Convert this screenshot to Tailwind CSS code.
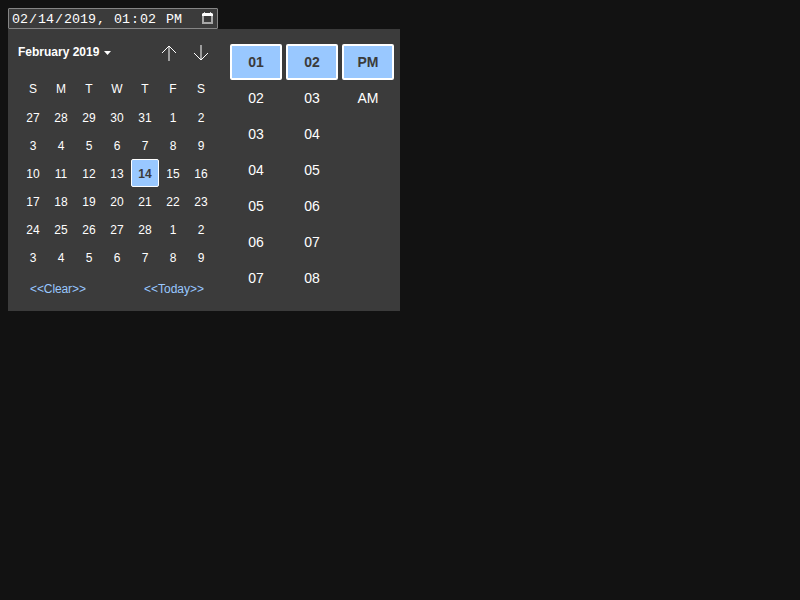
<!DOCTYPE html>
<html lang="en">
<head>
<meta charset="utf-8">
<title>Date and time picker</title>
<script src="https://cdn.jsdelivr.net/npm/@tailwindcss/browser@4"></script>
</head>
<body class="h-screen overflow-hidden bg-[#121212] p-2 font-['Liberation_Sans',Arial,sans-serif] text-white">
<div class="flex h-[21px] w-[210px] items-center justify-between rounded-[1px] border border-[#858585] bg-[#3b3b3b] pl-[2px] pr-[4px]">
  <div class="whitespace-pre pt-[2px] font-['Liberation_Mono','Courier_New',monospace] text-[13.333px] leading-[15px]"><span class="px-px">02</span>/<span class="px-px">14</span>/<span class="px-px">2019</span>, <span class="px-px">01</span>:<span class="px-px">02</span> <span class="px-px">PM</span></div>
  <svg class="mb-px h-3 w-[11px]" viewBox="0 0 11 12" fill="none"><path d="M1 3v8h9V3" stroke="#a8a8a8" stroke-width="2"/><path d="M1 1h9l1 1v2H0V2z" fill="white"/><path d="M2 0h1v1H2zM8 0h1v1H8z" fill="#c8c8c8"/></svg>
</div>
<div class="flex h-[282px] w-[392px] bg-[#3b3b3b]">
  <div class="w-[218px] pt-2">
    <div class="flex h-8 items-center pl-[10px] pr-[17px]">
      <div class="mb-[2px] flex items-center gap-[5px] text-xs font-bold"><span>February 2019</span><svg class="mt-px h-1 w-[7px]" viewBox="0 0 7 4" fill="white"><path d="M0 0h7L3.500 4z"/></svg></div>
      <div class="ml-auto flex gap-4">
        <svg class="size-4" viewBox="0 0 16 16" fill="none" stroke="white"><path d="M8 16V1" stroke="#9d9d9d" stroke-width="2"/><path d="M1 8l7-7 7 7"/></svg>
        <svg class="size-4" viewBox="0 0 16 16" fill="none" stroke="white"><path d="M8 0v15" stroke="#9d9d9d" stroke-width="2"/><path d="M1 8l7 7 7-7"/></svg>
      </div>
    </div>
    <div id="days" class="mt-[6px] ml-[11px] grid w-[196px] grid-cols-7 text-center text-xs leading-7"></div>
    <div class="mt-[5px] flex justify-between pl-[22px] pr-[22px] text-xs leading-[26px] text-[#99c8ff]"><span class="tracking-[-0.1px]">&lt;&lt;Clear&gt;&gt;</span><span>&lt;&lt;Today&gt;&gt;</span></div>
  </div>
  <div id="time" class="flex gap-1 pt-[14px] pl-1 text-center text-sm leading-9"></div>
</div>
<script>
const days = document.getElementById('days');
const time = document.getElementById('time');
const add = (parent, text, cls) => {
  const el = document.createElement('div');
  el.textContent = text;
  el.className = cls;
  parent.append(el);
  return el;
};
'SMTWTFS'.split('').forEach(d => add(days, d, 'h-7'));
[27,28,29,30,31,...Array.from({length:28}, (_, i) => i + 1),1,2,3,4,5,6,7,8,9].forEach((d, i) =>
  add(days, d, i === 18 ? 'h-7 rounded-[2px] border border-white bg-[#99c8ff] font-bold leading-[28px] text-[#3b3b3b]' : 'h-7 pt-px'));
[['01','02','03','04','05','06','07'],['02','03','04','05','06','07','08'],['PM','AM']].forEach(values => {
  const column = add(time, '', 'w-[52px]');
  values.forEach((v, i) => add(column, v, i ? 'h-9' : 'mt-px h-9 rounded-[2px] border-2 border-white bg-[#99c8ff] font-bold leading-8 text-[#3b3b3b]'));
});
</script>
</body>
</html>
